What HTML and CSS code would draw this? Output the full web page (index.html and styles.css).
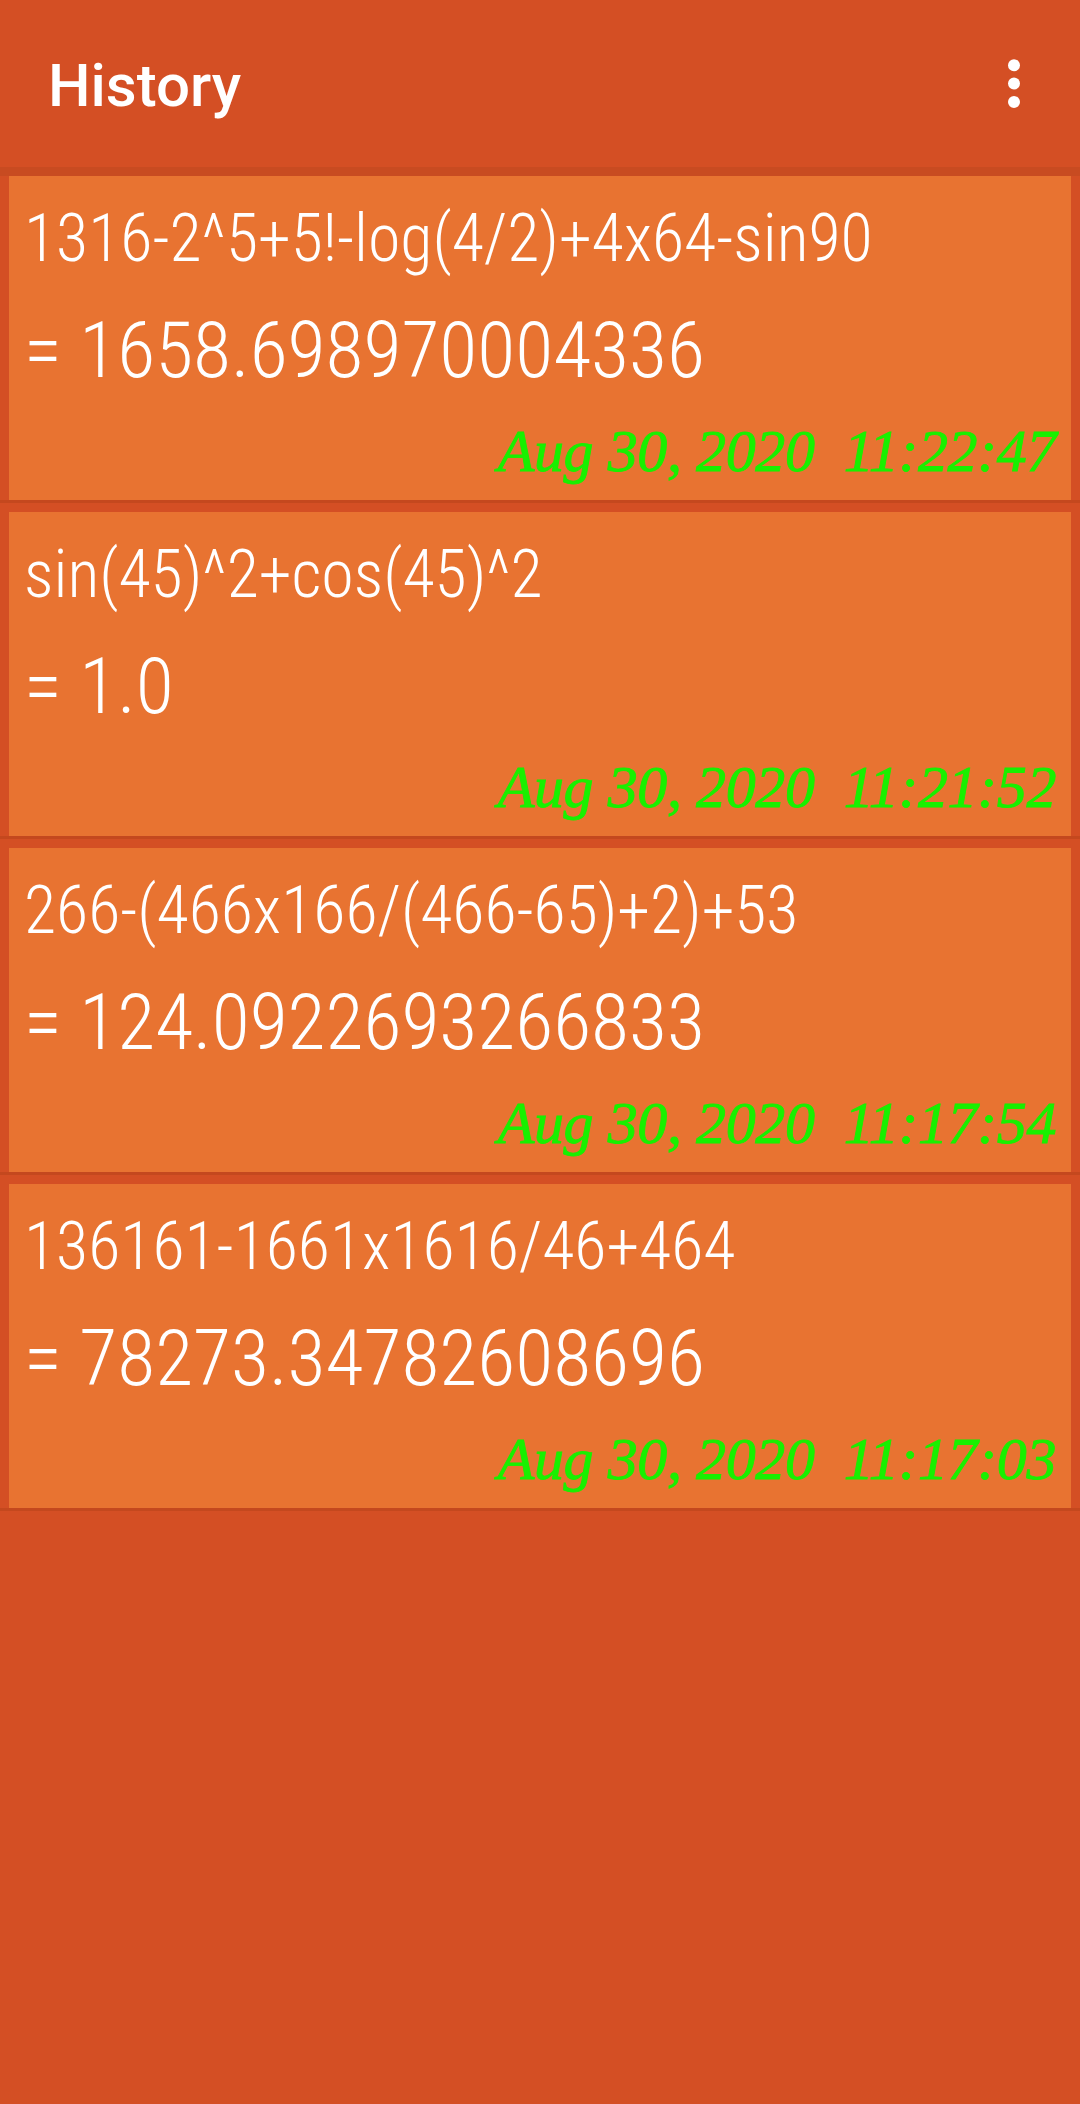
FILE: index.html
```html
<!DOCTYPE html>
<html>
<head>
<meta charset="utf-8">
<link rel="stylesheet" href="styles.css">
</head>
<body>
<header class="appbar">
  <span class="title">History</span>
  <svg class="menu" width="72" height="72" viewBox="0 0 24 24"><circle cx="12" cy="6.1" r="2" fill="#fff"/><circle cx="12" cy="12.2" r="2" fill="#fff"/><circle cx="12" cy="18.3" r="2" fill="#fff"/></svg>
</header>
<div class="shade"></div>
<ul class="list">
  <li class="item"><div class="card">
    <div class="expr">1316-2^5+5!-log(4/2)+4x64-sin90</div>
    <div class="result">= 1658.698970004336</div>
    <div class="date">Aug 30, 2020  11:22:47</div>
  </div></li>
  <li class="item"><div class="card">
    <div class="expr">sin(45)^2+cos(45)^2</div>
    <div class="result">= 1.0</div>
    <div class="date">Aug 30, 2020  11:21:52</div>
  </div></li>
  <li class="item"><div class="card">
    <div class="expr">266-(466x166/(466-65)+2)+53</div>
    <div class="result">= 124.0922693266833</div>
    <div class="date">Aug 30, 2020  11:17:54</div>
  </div></li>
  <li class="item"><div class="card">
    <div class="expr">136161-1661x1616/46+464</div>
    <div class="result">= 78273.34782608696</div>
    <div class="date">Aug 30, 2020  11:17:03</div>
  </div></li>
</ul>
</body>
</html>
```
FILE: styles.css
```css
html, body {
  margin: 0;
  padding: 0;
  background: #d44f24;
  height: 100%;
}
body {
  font-family: Roboto, "Liberation Sans", sans-serif;
}
.appbar {
  box-sizing: border-box;
  height: 167px;
  padding: 4px 30px 0 48px;
  display: flex;
  align-items: center;
  justify-content: space-between;
  background: #d44f24;
}
.title {
  color: #fff;
  font-family: Roboto, sans-serif;
  font-weight: 500;
  font-size: 60px;
  line-height: 70px;
}
.menu {
  display: block;
  margin-bottom: 6px;
}
.shade {
  height: 9px;
  background: #c84b21;
}
.list {
  list-style: none;
  margin: 0;
  padding: 0;
}
.item {
  padding: 0 9px;
  border-bottom: 3px solid #c4481e;
  margin-bottom: 9px;
}
.card {
  background: #e87331;
  padding: 24px 15px 16px 15px;
}
.expr, .result {
  color: #fff;
  font-family: "Roboto Condensed", Roboto, sans-serif;
  font-weight: 300;
  white-space: nowrap;
}
.expr {
  font-size: 66px;
  line-height: 77px;
}
.result {
  font-size: 78px;
  line-height: 91px;
  margin-top: 28px;
}
.date {
  margin-top: 22px;
  color: #18f000;
  font-family: "Liberation Serif", serif;
  font-style: italic;
  font-size: 60px;
  line-height: 66px;
  letter-spacing: -0.4px;
  text-align: right;
  white-space: pre;
  -webkit-text-stroke: 0.9px #18f000;
}
```
